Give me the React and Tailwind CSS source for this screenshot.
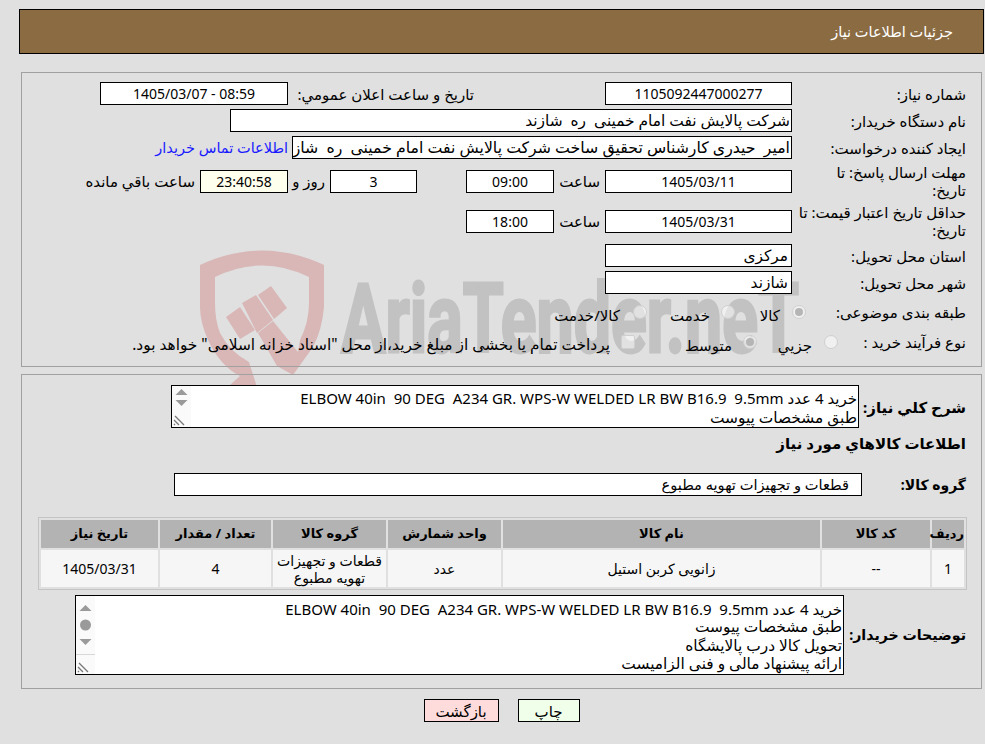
const Box = ({ className = "", children }) => (
  <div
    className={`flex items-center border border-black bg-white whitespace-pre overflow-hidden shrink-0 ${className}`}
  >
    {children}
  </div>
);

const Label = ({ className = "", children }) => (
  <div className={`shrink-0 leading-[18px] ${className}`}>{children}</div>
);

const Radio = ({ checked, className = "" }) => (
  <span
    className={`flex items-center justify-center w-[14px] h-[14px] rounded-full bg-white/50 border border-[#cfcfcf] shrink-0 ${className}`}
  >
    {checked && <span className="w-[8px] h-[8px] rounded-full bg-[#b5b5b5]" />}
  </span>
);

// scrollbar the old browser draws on the left of an rtl textarea
const FakeScroll = ({ tall }) => (
  <div className="absolute left-0 top-0 bottom-0 w-[19px] bg-[#fafafa] flex flex-col items-center">
    <svg width="19" height={tall ? 58 : 23} className="shrink-0">
      <polygon points="9.5,3 3.5,9 15.5,9" fill="#9a9a9a" transform={tall ? "translate(0,6)" : ""} />
      {tall && <circle cx="9.5" cy="29" r="5.5" fill="#9a9a9a" />}
      <polygon
        points="3.5,14 15.5,14 9.5,20"
        fill="#9a9a9a"
        transform={tall ? "translate(0,29)" : ""}
      />
    </svg>
    <div className="w-full h-px bg-[#d8d8d8] mt-auto mb-[19px]" />
    <svg width="12" height="12" className="absolute left-[1px] bottom-[1px]">
      <path d="M2 2 L11 11 M1 6 L6 11 M1 10 L2 11" stroke="#777" strokeWidth="1.3" fill="none" />
    </svg>
  </div>
);

const Watermark = () => (
  <svg
    width="985"
    height="744"
    className="absolute left-0 top-0 pointer-events-none"
    viewBox="0 0 985 744"
  >
    <g fill="#d9b7b7">
      <path d="M200 265 Q262 236 324 265 L324 307 Q322 330 313 347 L293 375 L277 366 L258 333 L273 321 L298 352 L300 340 Q309 322 309 303 L309 277 Q262 254 215 277 L215 303 Q215 320 220 333 Q230 352 249 362 L257 387 L230 385 L240 376 Q220 366 208 340 Q200 322 200 307 Z" />
      <polygon points="226,317 240,307 255,330 240,339" />
      <polygon points="242,303 256,295 273,320 257,333" />
      <polygon points="258,295 271,286 287,308 274,319" />
    </g>
    <text
      x="341"
      y="352"
      fontFamily="Roboto, sans-serif"
      fontWeight="700"
      fontSize="96"
      fill="#c2c2c2"
      stroke="#c2c2c2"
      strokeWidth="3"
      textLength="458"
      lengthAdjust="spacingAndGlyphs"
      direction="ltr"
    >
      AriaTender.neT
    </text>
  </svg>
);

const columns = [
  { title: "ردیف", width: "w-[32px]", value: "1" },
  { title: "کد کالا", width: "w-[108px]", value: "--" },
  { title: "نام کالا", width: "w-[317px]", value: "زانویی کربن استیل" },
  { title: "واحد شمارش", width: "w-[113px]", value: "عدد" },
  { title: "گروه کالا", width: "w-[113px]", value: "قطعات و تجهیزات تهویه مطبوع" },
  { title: "تعداد / مقدار", width: "w-[111px]", value: "4" },
  { title: "تاریخ نیاز", width: "w-[117px]", value: "1405/03/31" },
];

const App = () => {
  const line1 = "خرید 4 عدد ELBOW 40in  90 DEG  A234 GR. WPS-W WELDED LR BW B16.9  9.5mm";

  return (
    <div
      dir="rtl"
      className="relative h-[744px] overflow-hidden bg-[#e0e0e0] text-[15px] text-black font-['Noto_Sans','DejaVu_Sans',sans-serif]"
    >
      <Watermark />

      <div className="relative pt-[9px] pr-px pl-[19px]">
        <div className="h-[45px] flex items-center bg-[#8b6c42] border border-black pr-[30px] text-[14.5px] text-white">
          جزئیات اطلاعات نیاز
        </div>
      </div>

      <div className="relative mt-[18px] mr-[3px] ml-[21px] h-[295px] border border-[#a0a0a0] pt-[9px] pr-[15px] flex flex-col gap-1">
        <div className="flex items-center h-[23px]">
          <Label className="w-[174px]">شماره نیاز:</Label>
          <Box className="w-[187px] h-[23px] justify-center text-[14px]">1105092447000277</Box>
          <Label className="mr-[131px] w-[186px] whitespace-nowrap">تاریخ و ساعت اعلان عمومي:</Label>
          <Box className="w-[188px] h-[23px] justify-center text-[14px]">08:59 - 1405/03/07</Box>
        </div>
        <div className="flex items-center h-[23px]">
          <Label className="w-[174px]">نام دستگاه خریدار:</Label>
          <Box className="w-[562px] h-[23px] pr-px text-[15.4px]">شرکت پالایش نفت امام خمینی  ره  شازند</Box>
        </div>
        <div className="flex items-center h-[23px]">
          <Label className="w-[174px]">ایجاد کننده درخواست:</Label>
          <Box className="w-[500px] h-[23px] pr-px text-[15.75px]">
            امیر  حیدری کارشناس تحقیق ساخت شرکت پالایش نفت امام خمینی  ره  شازند
          </Box>
          <a className="mr-1 text-[14.5px] text-[#1a1aff] whitespace-nowrap">اطلاعات تماس خریدار</a>
        </div>
        <div className="flex items-center h-[36px]">
          <Label className="w-[174px] pl-[20px]">مهلت ارسال پاسخ: تا تاریخ:</Label>
          <Box className="w-[187px] h-[23px] justify-center text-[14px]">1405/03/11</Box>
          <Label className="w-[51px] pr-[5px]">ساعت</Label>
          <Box className="w-[88px] h-[23px] justify-center text-[14px]">09:00</Box>
          <div className="w-[49px]" />
          <Box className="w-[87px] h-[23px] justify-center text-[14px]">3</Box>
          <Label className="w-[42px] pr-[5px] whitespace-nowrap">روز و</Label>
          <Box className="w-[88px] h-[23px] justify-center text-[14px] bg-[#ffffee]!">23:40:58</Box>
          <Label className="pr-[5px] whitespace-nowrap">ساعت باقي مانده</Label>
        </div>
        <div className="flex items-center h-[36px]">
          <Label className="w-[174px]">حداقل تاریخ اعتبار قیمت: تا تاریخ:</Label>
          <Box className="w-[187px] h-[23px] justify-center text-[14px]">1405/03/31</Box>
          <Label className="w-[51px] pr-[5px]">ساعت</Label>
          <Box className="w-[88px] h-[23px] justify-center text-[14px]">18:00</Box>
        </div>
        <div className="flex items-center h-[23px] mt-px">
          <Label className="w-[174px]">استان محل تحویل:</Label>
          <Box className="w-[187px] h-[23px] pr-[3px] text-[15.4px]">مرکزی</Box>
        </div>
        <div className="flex items-center h-[23px]">
          <Label className="w-[174px]">شهر محل تحویل:</Label>
          <Box className="w-[187px] h-[23px] pr-[3px] text-[15.4px]">شازند</Box>
        </div>
        <div className="flex items-center h-[26px] mt-px">
          <Label className="w-[160px]">طبقه بندی موضوعی:</Label>
          <Radio checked />
          <span className="mr-[12px] w-[45px] -mb-1.5">کالا</span>
          <Radio />
          <span className="mr-[11px] w-[63px] -mb-1.5">خدمت</span>
          <Radio />
          <span className="mr-[13px] whitespace-nowrap -mb-1.5">کالا/خدمت</span>
        </div>
        <div className="flex items-center h-[26px]">
          <Label className="w-[128px] whitespace-nowrap">نوع فرآیند خرید :</Label>
          <Radio />
          <span className="mr-[12px] w-[55px] -mb-1.5">جزیي</span>
          <Radio checked />
          <span className="mr-[11px] w-[97px] -mb-1.5">متوسط</span>
          <span className="w-[14px] h-[14px] rounded-[2px] bg-white/50 border border-[#cfcfcf] shrink-0" />
          <span className="mr-[11px] whitespace-nowrap -mb-1.5 text-[15.4px]">
            پرداخت تمام یا بخشی از مبلغ خرید،از محل "اسناد خزانه اسلامی" خواهد بود.
          </span>
        </div>
      </div>

      <div className="relative mt-[7px] mr-[3px] ml-[21px] h-[315px] border border-[#a0a0a0] pt-[10px] pr-[15px] flex flex-col">
        <div className="flex items-center h-[43px] font-bold">
          <Label className="w-[107px] whitespace-nowrap">شرح کلي نیاز:</Label>
          <Box className="relative block! w-[688px] h-[43px] font-normal pt-[3px] pr-[1px]">
            <div className="h-[19px] leading-[19px]">{line1}</div>
            <div className="h-[19px] leading-[19px] text-[15.4px]">طبق مشخصات پیوست</div>
            <FakeScroll />
          </Box>
        </div>
        <div className="h-[20px] mt-[5px] font-bold leading-[20px]">اطلاعات کالاهاي مورد نیاز</div>
        <div className="flex items-center h-[23px] mt-[20px] font-bold">
          <Label className="w-[104px] text-[14px]">گروه کالا:</Label>
          <Box className="w-[688px] h-[23px] pr-[12px] font-normal text-[14.6px]">قطعات و تجهیزات تهویه مطبوع</Box>
        </div>
        <table className="mt-[21px] -mr-px w-[928px] border border-[#c4c4c4] border-separate border-spacing-[2px] table-fixed text-center">
          <thead>
            <tr>
              {columns.map((col) => (
                <th key={col.title} className={`${col.width} h-[28px] p-0 bg-[#b3b3b3] text-[13px] font-bold`}>
                  {col.title}
                </th>
              ))}
            </tr>
          </thead>
          <tbody>
            <tr>
              {columns.map((col) => (
                <td key={col.title} className="h-[37px] p-0 px-[4px] bg-[#f6f6f6] text-[14px] leading-[17px]">
                  {col.value}
                </td>
              ))}
            </tr>
          </tbody>
        </table>
        <div className="flex items-center h-[80px] mt-[5px] font-bold">
          <Label className="w-[122px] whitespace-nowrap text-[14.2px]">توضیحات خریدار:</Label>
          <Box className="relative block! w-[769px] h-[80px] font-normal pt-[4px] pr-[1px]">
            <div className="h-[18.3px] leading-[18.3px]">{line1}</div>
            <div className="h-[18.3px] leading-[18.3px] text-[15.4px]">طبق مشخصات پیوست</div>
            <div className="h-[18.3px] leading-[18.3px] text-[15.4px]">تحویل کالا درب پالایشگاه</div>
            <div className="h-[18.3px] leading-[18.3px] text-[15.4px]">ارائه پیشنهاد مالی و فنی الزامیست</div>
            <FakeScroll tall />
          </Box>
        </div>
      </div>

      <div className="relative flex justify-center gap-[19px] mt-[10px] pl-[18px]">
        <button className="w-[62px] h-[23px] border border-black bg-[#efffe9]">چاپ</button>
        <button className="w-[75px] h-[23px] border border-black bg-[#ffdcdc]">بازگشت</button>
      </div>
    </div>
  );
};

export default App;
